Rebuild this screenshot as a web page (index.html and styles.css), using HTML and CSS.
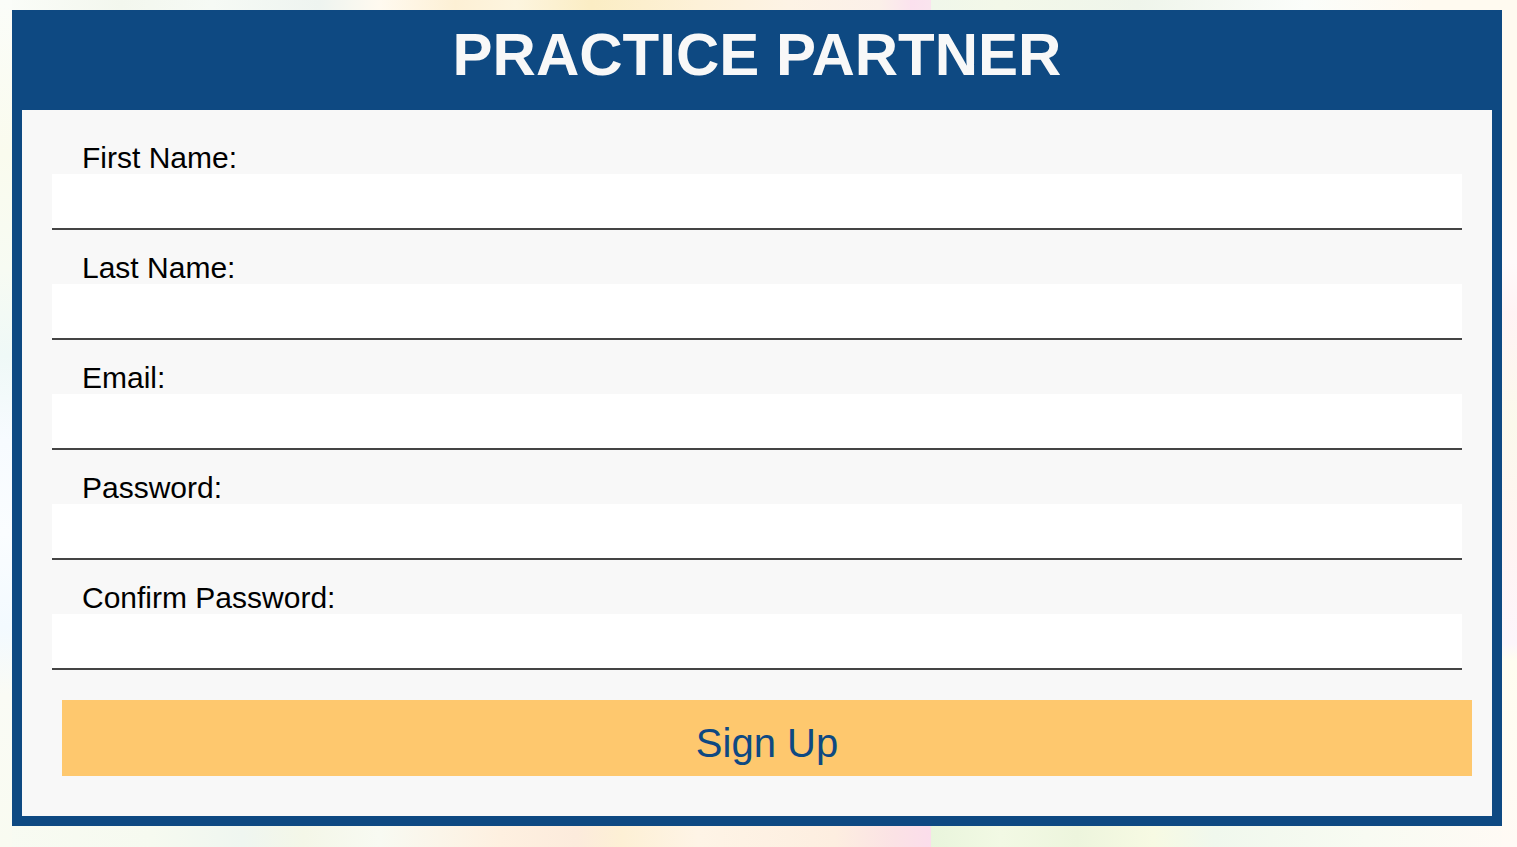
FILE: index.html
```html
<!DOCTYPE html>
<html lang="en">
<head>
<meta charset="utf-8">
<meta name="viewport" content="width=device-width, initial-scale=1">
<title>Practice Partner</title>
<link rel="stylesheet" href="styles.css">
</head>
<body class="page">
<main class="card">
  <header class="card-header">
    <h1 class="title">PRACTICE PARTNER</h1>
  </header>
  <form class="signup">
    <div class="field">
      <label class="label" for="first-name">First Name:</label>
      <input class="input" id="first-name" name="firstName" type="text">
    </div>
    <div class="field">
      <label class="label" for="last-name">Last Name:</label>
      <input class="input" id="last-name" name="lastName" type="text">
    </div>
    <div class="field">
      <label class="label" for="email">Email:</label>
      <input class="input" id="email" name="email" type="email">
    </div>
    <div class="field">
      <label class="label" for="password">Password:</label>
      <input class="input" id="password" name="password" type="password">
    </div>
    <div class="field">
      <label class="label" for="confirm-password">Confirm Password:</label>
      <input class="input" id="confirm-password" name="confirmPassword" type="password">
    </div>
    <button class="submit" type="submit">Sign Up</button>
  </form>
</main>
</body>
</html>
```
FILE: styles.css
```css
* {
  box-sizing: border-box;
}

.page {
  display: flow-root;
  min-height: 100vh;
  margin: 0;
  font-family: Helvetica, "Liberation Sans", Arial, sans-serif;
  /* Watercolour wash: side edges over the top and bottom bands */
  background:
    linear-gradient(to bottom, #fbfdf9, #fafbee 18%, #f7fbf3 32%, #eff9f7 42%, #f7fbff 52%, #fafdff 63%, #f3faff 74%, #fafbf5 82%, #f9fbf1) left / 12px 100% no-repeat,
    linear-gradient(to bottom, #fffaf0, #fffaf0 18%, #fffafa 31%, #fff3f4 37%, #fbf9ec 50%, #fff4f2 64%, #fcf5fb 76%, #fffdf0 78%, #fffaf5) right / 15px 100% no-repeat,
    linear-gradient(to right, #fbfdf9, #f3f7ee 8%, #f6faf5 14%, #eef4f0 21%, #fffaf0 25%, #fdf0d5 30%, #fdf5df 34%, #fbedc4 39%, #fdf1d8 46%, #fdf3e5 52%, #fbf0e9 58%, #fbe4ee 60%, #fbe0ee 55rem, #fae4ee 61.4%, #f0f7ea 61.4%, #f3f8e9 66%, #eff5eb 75%, #fbfdfa 86%, #fffaf0 94%, #fffaf0) top / 100% 10px no-repeat,
    linear-gradient(to right, #f8fbf2, #f6faf0 10%, #eff6f0 16%, #f4f7e8 20%, #f8faf2 25%, #fef0e0 33%, #fcebdc 38%, #fdf0d5 41%, #fef4e6 46%, #fdeee0 55%, #fbe2e5 59%, #fbddeb 61.4%, #e9f5dc 61.4%, #f2f9e4 66%, #edf5dd 71%, #f7fae3 76%, #f0f8ed 80%, #f8fbf2 90%, #fffaf5) bottom / 100% 21px no-repeat,
    #fafaf7;
}

.card {
  margin: 10px 15px 21px 12px;
  border: 10px solid #0e4982;
  background: #f8f8f8;
}

.card-header {
  padding-bottom: 20px;
  background: #0e4982;
}

.title {
  margin: 0;
  color: #f8f8f8;
  font-size: 60px;
  line-height: 70px;
  text-align: center;
}

.signup {
  display: flex;
  flex-direction: column;
  gap: 22px;
  padding: 32px 30px 40px;
}

.field {
  display: flex;
  flex-direction: column;
}

.label {
  padding-left: 30px;
  color: #000;
  font-size: 30px;
  line-height: 32px;
}

.input {
  width: 100%;
  height: 56px;
  padding: 10px 30px;
  border: 0;
  border-bottom: 2px solid #444;
  border-radius: 0;
  background: #fff;
  font: inherit;
  font-size: 30px;
}

.submit {
  margin: 8px -10px 0 10px;
  padding: 20px 10px 10px;
  border: 0;
  background: #fec86e;
  color: #0e4982;
  font: inherit;
  font-size: 40px;
  line-height: 46px;
  cursor: pointer;
}
```
